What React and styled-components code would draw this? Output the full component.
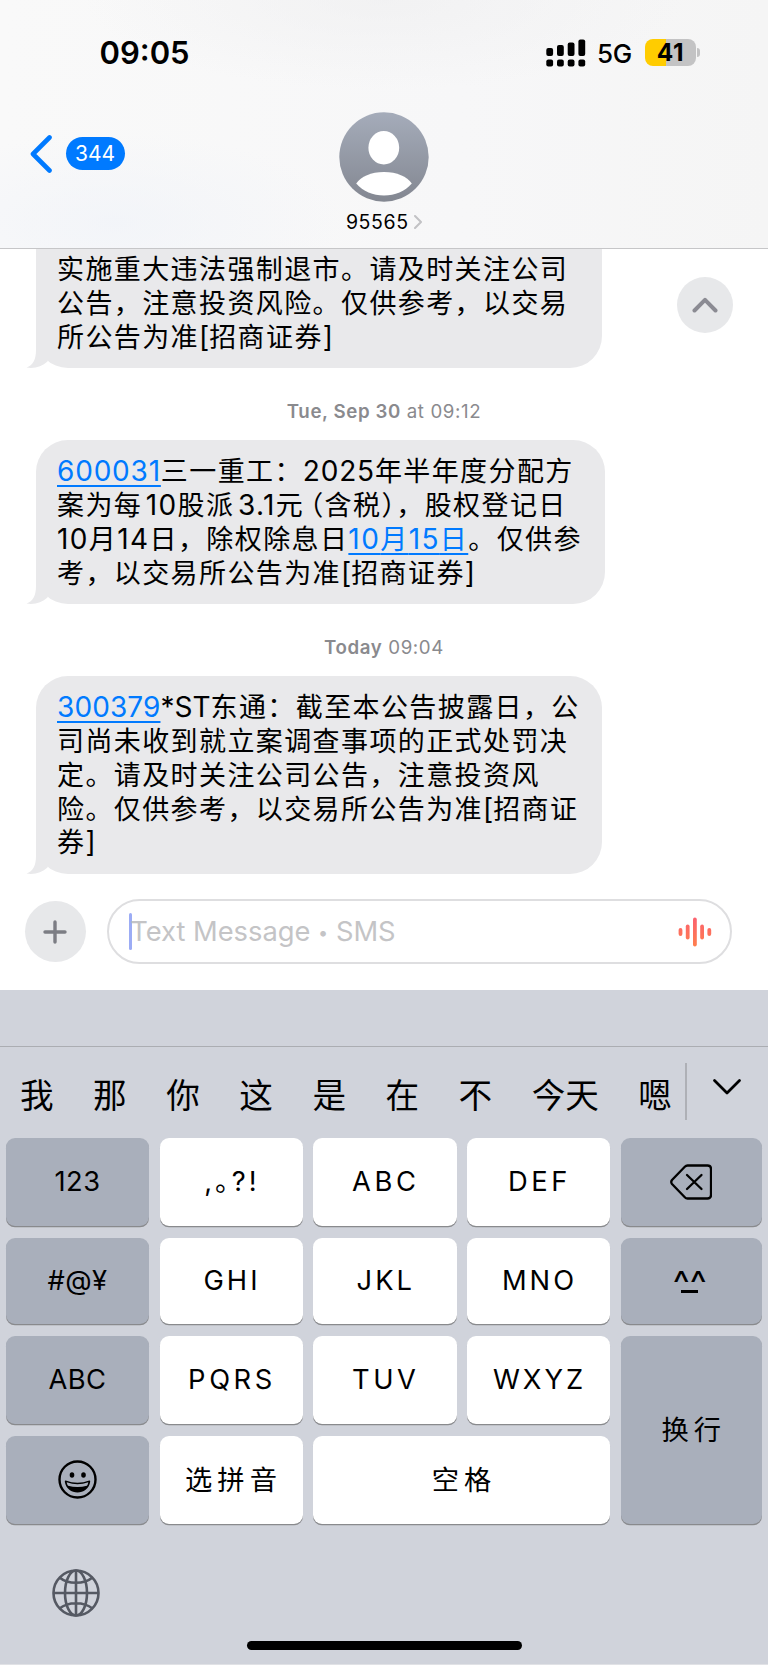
import styled, { createGlobalStyle } from 'styled-components';

const colors = {
    blue: '#007aff',
    bubble: '#e9e9eb',
    grey: '#8a8a8e',
    keyboard: '#d0d3db',
    darkKey: '#a9afbb',
}

const GlobalStyle = createGlobalStyle`
    * {
        box-sizing: border-box;
    }
    body {
        margin: 0;
        background: #fff;
        color: #000;
        font-family: Inter, 'Noto Sans CJK SC', sans-serif;
    }
    svg {
        display: block;
    }
`
const Phone = styled.div`
    width: 768px;
    height: 1665px;
    display: flex;
    flex-direction: column;
    overflow: hidden;
`
const Header = styled.header`
    height: 249px;
    flex: none;
    border-bottom: 1px solid #c6c6c8;
    background:
        radial-gradient(ellipse 300px 90px at 50% 0, rgba(238, 238, 239, 0.6), transparent),
        radial-gradient(ellipse 230px 90px at 15% 90%, rgba(240, 243, 249, 0.7), transparent),
        linear-gradient(to right, #f9f9f9, #f7f7f8 60%, #f5f5f5);
`
const StatusBar = styled.div`
    height: 105px;
    padding: 0 68px 0 99.5px;
    display: flex;
    align-items: center;
`
const Time = styled.div`
    flex: 1;
    font-size: 31px;
    font-weight: 600;
`
const Network = styled.div`
    margin: 1px 13px 0 11.5px;
    font-size: 26px;
    font-weight: 500;
    letter-spacing: -0.3px;
`
const Battery = styled.div`
    width: 51px;
    height: 27px;
    margin-bottom: 1px;
    border-radius: 8px;
    background: linear-gradient(to right, #ffcc00 41%, #c3c3c4 41%);
    font-size: 24.5px;
    font-weight: 700;
    line-height: 27px;
    text-align: center;
    letter-spacing: 0.6px;
`
const BatteryCap = styled.div`
    width: 3px;
    height: 9px;
    margin-left: 1px;
    border-radius: 0 3px 3px 0;
    background: #c3c3c4;
`
const NavBar = styled.div`
    display: grid;
    grid-template-columns: 1fr auto 1fr;
    padding: 7px 30px 0 29.5px;
`
const Back = styled.div`
    height: 83px;
    display: flex;
    align-items: center;
    gap: 14px;
`
const UnreadBadge = styled.div`
    width: 59px;
    height: 33px;
    border-radius: 17px;
    background: ${colors.blue};
    color: #fff;
    font-size: 21px;
    line-height: 33px;
    text-align: center;
`
const Contact = styled.div`
    display: flex;
    flex-direction: column;
    align-items: center;
    gap: 7.5px;
`
const ContactName = styled.div`
    display: flex;
    align-items: center;
    gap: 5px;
    font-size: 19.5px;
    line-height: 24px;
    letter-spacing: 0.6px;
`
const Thread = styled.main`
    height: 633.5px;
    flex: none;
    display: flex;
    flex-direction: column;
    align-items: flex-start;
    position: relative;
    padding-left: 36px;
`
const Bubble = styled.div`
    position: relative;
    width: ${(props) => props.$width}px;
    padding: ${(props) => props.$cut ? '2.3px 0 14.7px 21px' : '13.2px 0 15.3px 21px'};
    border-radius: ${(props) => props.$cut ? '0 0 32px 32px' : '32px'};
    background: ${colors.bubble};
    font-size: 27px;
    line-height: 33.9px;
    white-space: nowrap;
`
const Tail = styled.svg`
    position: absolute;
    left: -10px;
    bottom: 0;
`
const Line = styled.div`
    height: 33.9px;
    font-family: 'Noto Sans CJK SC', sans-serif;
    letter-spacing: 1.4px;
`
const Latin = styled.span`
    margin-left: ${(props) => props.$lead}px;
    font-family: Inter, sans-serif;
    font-size: 28px;
    letter-spacing: ${(props) => props.$tracking}px;
`
const NarrowParen = styled.span`
    margin-left: -8px;
`
const Link = styled.a`
    color: ${colors.blue};
    text-decoration: underline;
    text-decoration-thickness: 2px;
    text-underline-offset: 4px;
    text-decoration-skip-ink: none;
`
const Stamp = styled.div`
    width: 696px;
    height: 72px;
    padding-top: 32.3px;
    color: ${colors.grey};
    font-size: 18.7px;
    line-height: 24px;
    letter-spacing: 0.6px;
    text-align: center;
`
const StampDay = styled.span`
    font-weight: 600;
`
const RoundButton = styled.button`
    width: ${(props) => props.$size}px;
    height: ${(props) => props.$size}px;
    flex: none;
    display: flex;
    align-items: center;
    justify-content: center;
    padding: 0;
    border: 0;
    border-radius: 50%;
    background: #e7e8ea;
`
const ScrollUp = styled(RoundButton)`
    position: absolute;
    top: 28.3px;
    right: 34.6px;
`
const Composer = styled.div`
    height: 107px;
    flex: none;
    display: flex;
    align-items: center;
    gap: 21.5px;
    padding: 0 36px 8.5px 24.7px;
`
const Field = styled.div`
    flex: 1;
    height: 65px;
    display: flex;
    align-items: center;
    padding: 0 18.5px 0 20px;
    border: 2px solid #dedee0;
    border-radius: 33px;
    color: #c4c4c6;
    font-size: 27.3px;
`
const Caret = styled.div`
    width: 3px;
    height: 37px;
    border-radius: 2px;
    background: #9cacf5;
`
const Placeholder = styled.div`
    flex: 1;
    padding-top: 2px;
    margin-left: -2px;
    line-height: 34px;
`
const Bullet = styled.span`
    font-size: 18px;
    vertical-align: 2px;
`
const Keyboard = styled.section`
    flex: 1;
    display: flex;
    flex-direction: column;
    background: ${colors.keyboard};
    border-bottom: 1px solid #e1e2e6;
`
const Candidates = styled.div`
    height: 92px;
    margin-top: 56.5px;
    flex: none;
    display: flex;
    align-items: flex-start;
    padding: 16px 26px 0 20px;
    border-top: 1px solid #abadb2;
`
const CandidateList = styled.div`
    width: 667.5px;
    height: 57px;
    display: flex;
    gap: 39.5px;
    border-right: 2px solid #aeb0b6;
    font-family: 'Noto Sans CJK SC', sans-serif;
    font-size: 33.6px;
    line-height: 61.5px;
    white-space: nowrap;
`
const Expand = styled.div`
    padding: 15px 0 0 25.5px;
`
const Keys = styled.div`
    display: grid;
    grid-template-columns: 143px 143px 143.5px 143px 141.5px;
    grid-template-rows: 88px 86.3px 88.3px 88px;
    row-gap: 11.8px;
    column-gap: 10.5px;
    padding: 0 6px;
`
const Key = styled.div`
    grid-row: span ${(props) => props.$rows || 1};
    grid-column: span ${(props) => props.$cols || 1};
    display: flex;
    align-items: center;
    justify-content: center;
    padding-left: ${(props) => props.$spacing ? 2 : 0}px;
    border-radius: 9px;
    background: ${(props) => props.$dark ? colors.darkKey : '#fff'};
    box-shadow: 0 1.3px 0 #898a8d;
    font-size: 27.3px;
    line-height: 34px;
    letter-spacing: ${(props) => props.$spacing || 0.4}px;
`
const HanKey = styled(Key)`
    padding: 3px 0 0 5px;
    letter-spacing: 5px;
`
// Closed eyes with a flat mouth under them
const Kaomoji = styled.div`
    height: 34px;
    padding-right: 3px;
    display: flex;
    flex-direction: column;
    align-items: center;
    font-size: 36px;
    line-height: 38px;
    letter-spacing: 0;

    &::after {
        content: '';
        flex: none;
        width: 17px;
        height: 3px;
        background: #000;
        margin-top: -12px;
    }
`
const KeyboardFooter = styled.footer`
    flex: 1;
    display: grid;
    grid-template-columns: 1fr 275px 1fr;
    padding: 45px 0 14px;
`
const GlobeSlot = styled.div`
    padding-left: 52px;
`
const HomeIndicator = styled.div`
    height: 9.5px;
    align-self: end;
    border-radius: 5px;
    background: #000;
`

const SignalIcon = () => (
    <svg width="40" height="28" viewBox="0 0 40 28">
        {[[9, 8], [6, 11], [3.5, 13.5], [0.5, 16.5]].map(([y, h], i) => (
            <g key={i}>
                <rect x={i * 10.7 + 0.3} y={y} width="6.8" height={h} rx="2" />
                <rect x={i * 10.7 + 0.3} y="20.5" width="6.8" height="7" rx="2" />
            </g>
        ))}
    </svg>
)

const Avatar = () => (
    <svg width="90" height="90" viewBox="0 0 90 90">
        <defs>
            <linearGradient id="avatar" x1="0" y1="0" x2="0" y2="1">
                <stop offset="0" stopColor="#a5acba" />
                <stop offset="1" stopColor="#838791" />
            </linearGradient>
        </defs>
        <circle cx="45" cy="45" r="44.7" fill="url(#avatar)" />
        <ellipse cx="44.8" cy="35.7" rx="15.4" ry="16.7" fill="#fff" />
        <path d="M17.2 71.5C22 64.5 32 60 45 60s23 4.500 27.800 11.500C66 79.500 56 83.500 45 83.500S24 79.500 17.200 71.500z" fill="#fff" />
    </svg>
)

const Chevron = ({ w, h, d, color, stroke }) => (
    <svg width={w} height={h} viewBox={`0 0 ${w} ${h}`} fill="none" stroke={color} strokeWidth={stroke} strokeLinecap="round" strokeLinejoin="round">
        <path d={d} />
    </svg>
)

const WaveIcon = () => (
    <svg width="34" height="30" viewBox="0 0 34 30">
        <defs>
            <linearGradient id="wave" gradientUnits="userSpaceOnUse" x1="0" y1="0" x2="0" y2="30">
                <stop offset="0" stopColor="#fb6070" />
                <stop offset="1" stopColor="#ff7f4c" />
            </linearGradient>
        </defs>
        {[8, 15, 29, 15, 8].map((h, i) => (
            <rect key={i} x={i * 7.2 + 0.6} y={15 - h / 2} width="3.8" height={h} rx="1.9" fill="url(#wave)" />
        ))}
    </svg>
)

const BackspaceIcon = () => (
    <svg width="42" height="36" viewBox="0 0 42 36" fill="none" stroke="#000" strokeWidth="2.3" strokeLinecap="round" strokeLinejoin="round">
        <path d="M17.500 1.500H37.500Q41 1.500 41 5V31Q41 34.500 37.500 34.500H17.500Q16 34.500 14.800 33.300L2 20Q.5 18 2 16L14.800 2.700Q16 1.500 17.500 1.500z" />
        <path d="M17 11l14.500 14M31.500 11L17 25" />
    </svg>
)

const SmileIcon = () => (
    <svg width="40" height="40" viewBox="0 0 40 40">
        <circle cx="19.500" cy="19.500" r="18" fill="none" stroke="#000" strokeWidth="2.400" />
        <ellipse cx="14" cy="15" rx="2.300" ry="2.800" />
        <ellipse cx="25.500" cy="15" rx="2.300" ry="2.800" />
        <path d="M7.700 20.500Q19.500 25.200 31.300 20.500Q32.400 20.500 32.200 21.800C31 29 25.500 32.500 19.500 32.500S8 29 6.800 21.800Q6.700 20.500 7.700 20.500z" />
        <path d="M8.700 22.300Q19.500 26.100 30.300 22.300Q30 24.300 29 25.800Q19.500 28.200 10 25.800Q9 24.300 8.700 22.300z" fill={colors.darkKey} />
    </svg>
)

const GlobeIcon = () => (
    <svg width="48" height="48" viewBox="0 0 48 48" fill="none" stroke="#555963" strokeWidth="2.600">
        <circle cx="24" cy="24" r="22.500" />
        <ellipse cx="24" cy="24" rx="11" ry="22.500" />
        <path d="M24 1v46M1 24h46M7.500 8.500Q14 13.800 24 13.800T40.500 8.500M7.500 39.500Q14 34.200 24 34.200T40.500 39.500" />
    </svg>
)

// short numbers are set a little looser than long ones
const trackingOf = (run) => {
    if (!/^\d/.test(run)) return 0;
    if (run === '300379') return 0.1;
    return run.length > 3 ? 0.8 : 1.4;
}

// Digits and latin letters use their own face inside the Chinese lines
const mixed = (text, lead = 0) => text.split(/([!-~]+|（)/).map((part, i) => {
    if (part === '（') return <NarrowParen key={i}>{part}</NarrowParen>
    return i % 2 ? <Latin key={i} $tracking={trackingOf(part)} $lead={lead}>{part}</Latin> : part
})

const Message = ({ lines, width, cut }) => (
    <Bubble $width={width} $cut={cut}>
        {lines.map((line, i) => (
            <Line key={i}>
                {line.map((part, j) => part.tappable
                    ? <Link key={j}>{mixed(part.tappable)}</Link>
                    : <span key={j}>{part.text ? mixed(part.text, part.lead) : mixed(part)}</span>)}
            </Line>
        ))}
        <Tail width="30" height="32" viewBox="0 0 30 32">
            <path d="M10 0V14C10 24 7 29 0.500 31.600C9 32.800 16 30.500 21.500 25.500L26 10V0z" fill={colors.bubble} />
        </Tail>
    </Bubble>
)

const firstMessage = [
    ['实施重大违法强制退市。请及时关注公司'],
    ['公告，注意投资风险。仅供参考，以交易'],
    ['所公告为准[招商证券]'],
]
const secondMessage = [
    [{ tappable: '600031' }, '三一重工：2025年半年度分配方'],
    [{ text: '案为每10股派3.1元（含税），股权登记日', lead: 3.5 }],
    ['10月14日，除权除息日', { tappable: '10月15日' }, '。仅供参'],
    ['考，以交易所公告为准[招商证券]'],
]
const thirdMessage = [
    [{ tappable: '300379' }, '*ST', { text: '东通：截至本公告披露日，公' }],
    ['司尚未收到就立案调查事项的正式处罚决'],
    ['定。请及时关注公司公告，注意投资风'],
    ['险。仅供参考，以交易所公告为准[招商证'],
    ['券]'],
]
const candidates = ['我', '那', '你', '这', '是', '在', '不', '今天', '嗯']

function App() {
    return (
        <Phone>
            <GlobalStyle />
            <Header>
                <StatusBar>
                    <Time>09:05</Time>
                    <SignalIcon />
                    <Network>5G</Network>
                    <Battery>41</Battery>
                    <BatteryCap />
                </StatusBar>
                <NavBar>
                    <Back>
                        <Chevron w={22} h={38} d="M19.500 2.500L3 19L19.500 35.500" color={colors.blue} stroke={4.6} />
                        <UnreadBadge>344</UnreadBadge>
                    </Back>
                    <Contact>
                        <Avatar />
                        <ContactName>
                            95565
                            <Chevron w={8} h={14} d="M1 1L7 7L1 13" color="#c2c2c5" stroke={2} />
                        </ContactName>
                    </Contact>
                </NavBar>
            </Header>
            <Thread>
                <Message lines={firstMessage} width={566} cut />
                <Stamp><StampDay>Tue, Sep 30</StampDay> at 09:12</Stamp>
                <Message lines={secondMessage} width={569} />
                <Stamp><StampDay>Today</StampDay> 09:04</Stamp>
                <Message lines={thirdMessage} width={566} />
                <ScrollUp $size={56}>
                    <Chevron w={26} h={16} d="M2.500 13.500L13 2.800L23.500 13.500" color="#8b8b93" stroke={4} />
                </ScrollUp>
            </Thread>
            <Composer>
                <RoundButton $size={61}>
                    <Chevron w={24} h={24} d="M12 2V22M2 12H22" color="#7c7d84" stroke={3.4} />
                </RoundButton>
                <Field>
                    <Caret />
                    <Placeholder>Text Message <Bullet>•</Bullet> SMS</Placeholder>
                    <WaveIcon />
                </Field>
            </Composer>
            <Keyboard>
                <Candidates>
                    <CandidateList>
                        {candidates.map((word) => <span key={word}>{word}</span>)}
                    </CandidateList>
                    <Expand>
                        <Chevron w={30} h={18} d="M2.500 2.500L15 15L27.500 2.500" color="#000" stroke={2.8} />
                    </Expand>
                </Candidates>
                <Keys>
                    <Key $dark>123</Key>
                    <Key $spacing={3}>,｡?!</Key>
                    <Key $spacing={3.6}>ABC</Key>
                    <Key $spacing={3.6}>DEF</Key>
                    <Key $dark><BackspaceIcon /></Key>
                    <Key $dark>#@¥</Key>
                    <Key $spacing={3}>GHI</Key>
                    <Key $spacing={3}>JKL</Key>
                    <Key $spacing={3}>MNO</Key>
                    <Key $dark>
                        <Kaomoji>^^</Kaomoji>
                    </Key>
                    <Key $dark>ABC</Key>
                    <Key $spacing={3.6}>PQRS</Key>
                    <Key $spacing={3.6}>TUV</Key>
                    <Key $spacing={3}>WXYZ</Key>
                    <HanKey $dark $rows={2}>换行</HanKey>
                    <Key $dark><SmileIcon /></Key>
                    <HanKey>选拼音</HanKey>
                    <HanKey $cols={2}>空格</HanKey>
                </Keys>
                <KeyboardFooter>
                    <GlobeSlot><GlobeIcon /></GlobeSlot>
                    <HomeIndicator />
                </KeyboardFooter>
            </Keyboard>
        </Phone>
    )
}
export default App;
